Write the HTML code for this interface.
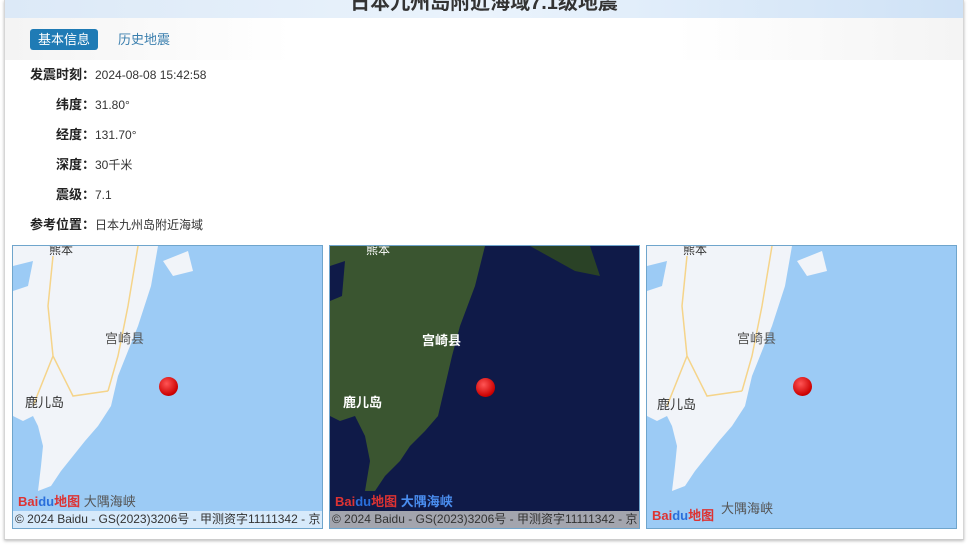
<!DOCTYPE html>
<html><head><meta charset="utf-8"><style>
*{margin:0;padding:0;box-sizing:border-box}
body{width:969px;height:545px;overflow:hidden;background:#fff;font-family:"Liberation Sans","Noto Sans CJK SC",sans-serif;position:relative}
.frame{position:absolute;left:4px;top:0;width:960px;height:540px;border-left:1px solid #d6d6d6;border-right:1px solid #d6d6d6;border-bottom:1px solid #ccc;box-shadow:0 1px 3px #bbb}
.hdr{position:absolute;left:5px;top:0;width:958px;height:18px;background:linear-gradient(90deg,#dce9f7,#eaf3fc 50%,#cfe2f6);overflow:hidden}
.hdr span{position:absolute;left:0;right:0;top:-14px;text-align:center;font-size:20px;font-weight:bold;color:#333}
.tabs{position:absolute;left:5px;top:18px;width:958px;height:42px;background:linear-gradient(90deg,#f4f4f4,#fff 30%,#fff 70%,#f4f4f4)}
.t1{position:absolute;left:25px;top:11px;width:68px;height:21px;background:#1f7bb5;border-radius:3px;color:#fff;font-size:13px;text-align:center;line-height:21px}
.t2{position:absolute;left:113px;top:11px;color:#3b7fae;font-size:13px;line-height:21px}
.row{position:absolute;font-size:12px;color:#333;line-height:14px}
.row b{display:inline-block;text-align:right;width:95px;font-weight:bold;color:#222;font-size:13px}
.map{position:absolute;top:245px;width:311px;height:284px;border:1px solid #6fa5cc;overflow:hidden}
.cp{position:absolute;left:0;bottom:0;width:100%;height:17px;font-size:12px;line-height:17px;padding-left:2px;white-space:nowrap;color:#333;background:rgba(255,255,255,.6)}
.logo{position:absolute;left:5px;bottom:18px;font-size:13px;font-weight:bold;color:#d33}
.dot{position:absolute;width:19px;height:19px;border-radius:50%;background:radial-gradient(circle at 40% 35%,#f55,#c00 70%,#900);}
</style></head><body>
<div class="frame"></div>
<div class="hdr"><span>日本九州岛附近海域7.1级地震</span></div>
<div class="tabs"><div class="t1">基本信息</div><div class="t2">历史地震</div></div>
<div class="row" style="left:0;top:68px"><b>发震时刻：</b>2024-08-08 15:42:58</div>
<div class="row" style="left:0;top:98px"><b>纬度：</b>31.80°</div>
<div class="row" style="left:0;top:128px"><b>经度：</b>131.70°</div>
<div class="row" style="left:0;top:158px"><b>深度：</b>30千米</div>
<div class="row" style="left:0;top:188px"><b>震级：</b>7.1</div>
<div class="row" style="left:0;top:218px"><b>参考位置：</b>日本九州岛附近海域</div>

<div class="map" style="left:12px;background:#9ccbf5">
<svg width="311" height="284" style="position:absolute;left:0;top:0"><path d="M0,0H145L138,40L125,80L115,105L105,130L98,160L85,180L72,195L60,210L48,225L38,240L25,245L28,220L30,200L25,180L20,170L10,175L0,170Z" fill="#f1f4f9"/><path d="M0,20L20,15L15,40L0,45Z" fill="#9ccbf5"/><path d="M150,15L175,5L180,25L160,30Z" fill="#f1f4f9"/><path d="M125,0L115,60L105,110L95,145M40,10L35,60L40,110L60,150L95,145M40,110L20,160" stroke="#f5d48a" stroke-width="1.5" fill="none"/></svg>
<div style="position:absolute;left:92px;top:82px;font-size:13px;color:#555">宫崎县</div>
<div style="position:absolute;left:12px;top:146px;font-size:13px;color:#333">鹿儿岛</div>
<div style="position:absolute;left:36px;top:-5px;font-size:12px;color:#333">熊本</div>
<div class="dot" style="left:146px;top:131px"></div>
<div class="logo">Bai<span style="color:#2a6fdb">du</span>地图 <span style="color:#555;font-weight:normal">大隅海峡</span></div>
<div class="cp">© 2024 Baidu - GS(2023)3206号 - 甲测资字11111342 - 京</div></div>

<div class="map" style="left:329px;background:#0f1a48">
<svg width="311" height="284" style="position:absolute;left:0;top:0"><path d="M0,0H155L145,40L130,80L122,110L115,140L108,170L95,185L80,200L70,215L55,230L45,245L35,245L40,215L35,190L25,170L10,175L0,170Z" fill="#3a5530"/><path d="M0,20L15,15L12,50L0,55Z" fill="#0f1a48"/><path d="M200,0H260L270,30L245,25Z" fill="#2a4226"/></svg>
<div style="position:absolute;left:92px;top:84px;font-size:13px;color:#fff;font-weight:bold">宫崎县</div>
<div style="position:absolute;left:13px;top:146px;font-size:13px;color:#fff;font-weight:bold">鹿儿岛</div>
<div style="position:absolute;left:36px;top:-5px;font-size:12px;color:#fff">熊本</div>
<div class="dot" style="left:146px;top:132px"></div>
<div class="logo">Bai<span style="color:#2a6fdb">du</span>地图 <span style="color:#4a8ef0">大隅海峡</span></div>
<div class="cp" style="background:rgba(200,200,200,.8)">© 2024 Baidu - GS(2023)3206号 - 甲测资字11111342 - 京</div></div>

<div class="map" style="left:646px;background:#9ccbf5">
<svg width="311" height="284" style="position:absolute;left:0;top:0"><path d="M0,0H145L138,40L125,80L115,105L105,130L98,160L85,180L72,195L60,210L48,225L38,240L25,245L28,220L30,200L25,180L20,170L10,175L0,170Z" fill="#f1f4f9"/><path d="M0,20L20,15L15,40L0,45Z" fill="#9ccbf5"/><path d="M150,15L175,5L180,25L160,30Z" fill="#f1f4f9"/><path d="M125,0L115,60L105,110L95,145M40,10L35,60L40,110L60,150L95,145M40,110L20,160" stroke="#f5d48a" stroke-width="1.5" fill="none"/></svg>
<div style="position:absolute;left:90px;top:82px;font-size:13px;color:#555">宫崎县</div>
<div style="position:absolute;left:10px;top:148px;font-size:13px;color:#333">鹿儿岛</div>
<div style="position:absolute;left:36px;top:-5px;font-size:12px;color:#333">熊本</div>
<div class="dot" style="left:146px;top:131px"></div>
<div style="position:absolute;left:74px;top:252px;font-size:13px;color:#555">大隅海峡</div>
<div class="logo" style="bottom:4px">Bai<span style="color:#2a6fdb">du</span>地图</div></div>
</body></html>
